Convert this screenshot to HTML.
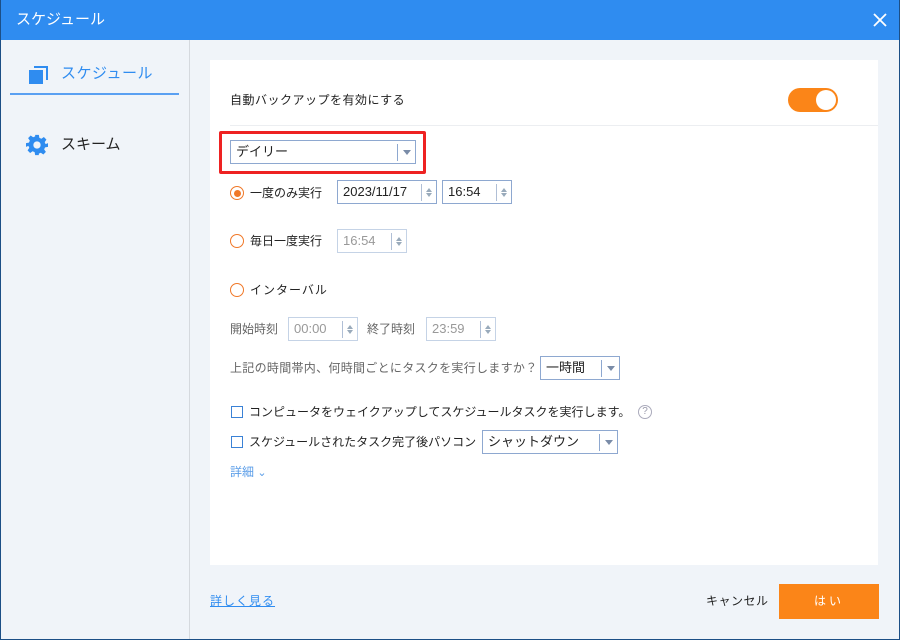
<!DOCTYPE html><html><head><meta charset="utf-8"><style>
*{margin:0;padding:0;box-sizing:border-box}
body{width:900px;height:640px;overflow:hidden;font-family:"Liberation Sans","Noto Sans CJK JP",sans-serif;font-size:12px;line-height:16px;color:#222;background:#f0f4f9;position:relative}
.a{position:absolute;white-space:nowrap}
.win{position:absolute;left:0;top:0;width:900px;height:640px;border:1px solid #1c4f86;border-top:none}
.title{left:0;top:0;width:900px;height:40px;background:#2f8cf0;color:#fff;font-size:15px;line-height:20px;padding:10px 16px}
.box{position:absolute;border:1px solid #8ea8d0;background:#fff;height:24px;padding:3px 5px;font-size:13px}
.dis{border-color:#c5d3e6;color:#999}
.spin{position:absolute;right:0;top:3px;width:15px;height:17px;border-left:1px solid #b0bfd6}
.spin:before{content:"";position:absolute;left:4px;top:1px;border:3px solid transparent;border-bottom:4px solid #9ab}
.spin:after{content:"";position:absolute;left:4px;top:9px;border:3px solid transparent;border-top:4px solid #9ab}
.dd{position:absolute;right:0;top:3px;width:18px;height:17px;border-left:1px solid #8ea8d0}
.dd:after{content:"";position:absolute;left:5px;top:6px;border:4px solid transparent;border-top:5px solid #7a8ca8}
.radio{position:absolute;width:14px;height:14px;border:1.5px solid #f07828;border-radius:50%}
.cb{position:absolute;width:12px;height:12px;border:1.5px solid #3b82d6}
</style></head><body>
<div class="a title">スケジュール</div>
<svg class="a" style="left:873px;top:13px" width="14" height="14"><path d="M1 1L13 13M13 1L1 13" stroke="#fff" stroke-width="1.8"/></svg>
<div class="a" style="left:189px;top:40px;width:1px;height:600px;background:#d5d9de"></div>
<svg class="a" style="left:28px;top:65px" width="20" height="20"><path d="M6 2H19V15" fill="none" stroke="#2f8cf0" stroke-width="2"/><rect x="1" y="5" width="14" height="14" fill="#2f8cf0"/></svg>
<div class="a" style="left:61px;top:64px;font-size:15px;line-height:20px;color:#2f8cf0;letter-spacing:0.5px">スケジュール</div>
<div class="a" style="left:10px;top:93px;width:169px;height:2px;background:#5aa0f2"></div>
<svg class="a" style="left:26px;top:134px" width="22" height="22" viewBox="0 0 24 24"><path fill="#2f8cf0" d="M10 1h4l.6 3.2 2.2 1 2.7-1.9 2.8 2.8-1.9 2.7 1 2.2L24 10v4l-3.2.6-1 2.2 1.9 2.7-2.8 2.8-2.7-1.9-2.2 1L14 23h-4l-.6-3.2-2.2-1-2.7 1.9-2.8-2.8 1.9-2.7-1-2.2L0 14v-4l3.2-.6 1-2.2L2.3 4.5 5.1 1.7l2.7 1.9 2.2-1zM12 8a4 4 0 100 8 4 4 0 000-8z"/></svg>
<div class="a" style="left:61px;top:135px;font-size:15px;line-height:20px">スキーム</div>
<div class="a" style="left:210px;top:60px;width:668px;height:505px;background:#fff"></div>
<div class="a" style="left:230px;top:92px;letter-spacing:0.5px">自動バックアップを有効にする</div>
<div class="a" style="left:788px;top:88px;width:50px;height:24px;border-radius:12px;background:#fb8518"></div>
<div class="a" style="left:816px;top:90px;width:20px;height:20px;border-radius:50%;background:#fff"></div>
<div class="a" style="left:230px;top:125px;width:648px;height:1px;background:#eceef1"></div>
<div class="a" style="left:219px;top:131px;width:207px;height:43px;border:3px solid #ee2222;border-radius:2px"></div>
<div class="box" style="left:230px;top:140px;width:186px">デイリー<span class="dd"></span></div>
<div class="radio" style="left:230px;top:186px"></div><div class="a" style="left:234px;top:190px;width:7px;height:7px;border-radius:50%;background:#f07828"></div>
<div class="a" style="left:250px;top:185px">一度のみ実行</div>
<div class="box" style="left:337px;top:180px;width:100px">2023/11/17<span class="spin"></span></div>
<div class="box" style="left:442px;top:180px;width:70px">16:54<span class="spin"></span></div>
<div class="radio" style="left:230px;top:234px"></div>
<div class="a" style="left:250px;top:233px">毎日一度実行</div>
<div class="box dis" style="left:337px;top:229px;width:70px">16:54<span class="spin"></span></div>
<div class="radio" style="left:230px;top:283px"></div>
<div class="a" style="left:250px;top:282px;letter-spacing:1px">インターバル</div>
<div class="a" style="left:230px;top:321px;color:#666">開始時刻</div>
<div class="box dis" style="left:288px;top:317px;width:70px">00:00<span class="spin"></span></div>
<div class="a" style="left:367px;top:321px;color:#666">終了時刻</div>
<div class="box dis" style="left:426px;top:317px;width:70px">23:59<span class="spin"></span></div>
<div class="a" style="left:230px;top:360px;color:#666;letter-spacing:0.3px">上記の時間帯内、何時間ごとにタスクを実行しますか？</div>
<div class="box" style="left:540px;top:356px;width:80px">一時間<span class="dd"></span></div>
<div class="cb" style="left:231px;top:406px"></div>
<div class="a" style="left:249px;top:404px">コンピュータをウェイクアップしてスケジュールタスクを実行します。</div>
<div class="a" style="left:638px;top:405px;width:14px;height:14px;border:1px solid #aab;border-radius:50%;font-size:10px;color:#99a;text-align:center;line-height:12px">?</div>
<div class="cb" style="left:231px;top:436px"></div>
<div class="a" style="left:249px;top:434px">スケジュールされたタスク完了後パソコン</div>
<div class="box" style="left:482px;top:430px;width:136px">シャットダウン<span class="dd"></span></div>
<div class="a" style="left:230px;top:464px;color:#5a9de8">詳細 <span style="font-size:11px">&#8964;</span></div>
<div class="a" style="left:210px;top:593px;color:#2f8cf0;text-decoration:underline;letter-spacing:1px">詳しく見る</div>
<div class="a" style="left:706px;top:593px;letter-spacing:0.5px">キャンセル</div>
<div class="a" style="left:779px;top:584px;width:100px;height:35px;background:#fb8518;color:#fff;text-align:center;line-height:35px;letter-spacing:3px">はい</div>
<div class="win"></div>
</body></html>
